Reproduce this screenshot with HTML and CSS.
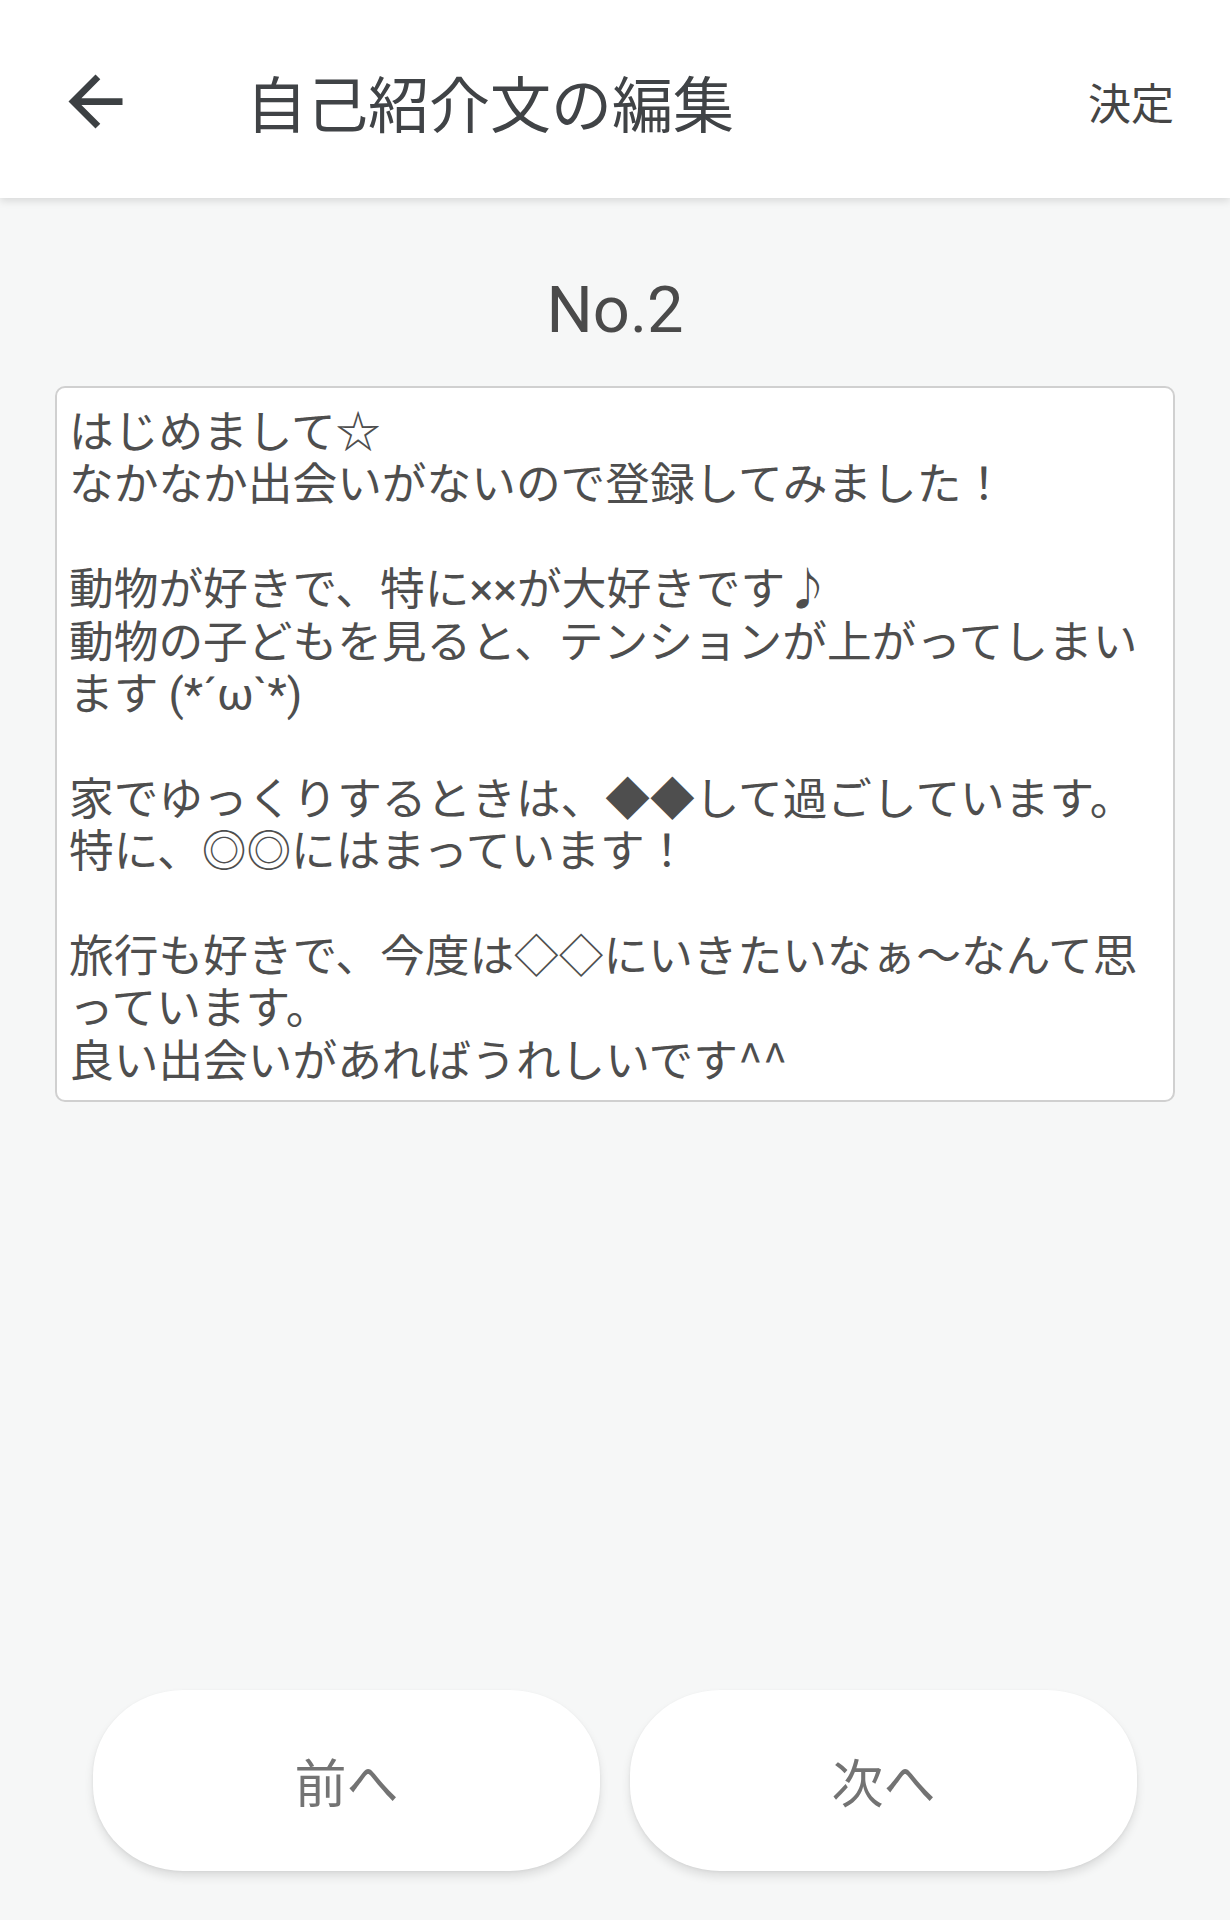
FILE: index.html
```html
<!DOCTYPE html>
<html lang="ja">
<head>
<meta charset="utf-8">
<title>自己紹介文の編集</title>
<link rel="stylesheet" href="styles.css">
</head>
<body>
<div class="screen">
  <header class="appbar">
    <svg class="back" viewBox="0 0 24 24" aria-hidden="true"><path d="M20 11H7.83l5.59-5.59L12 4l-8 8 8 8 1.41-1.41L7.83 13H20v-2z"/></svg>
    <h1 class="title">自己紹介文の編集</h1>
    <span class="done">決定</span>
  </header>
  <main class="content">
    <div class="number">No.2</div>
    <div class="textbox">はじめまして☆
なかなか出会いがないので登録してみました！

動物が好きで、特に<span class="latin">××</span>が大好きです♪
動物の子どもを見ると、テンションが上がってしまいます <span class="latin">(*´ω`*)</span>

家でゆっくりするときは、◆◆して過ごしています。
特に、◎◎にはまっています！

旅行も好きで、今度は◇◇にいきたいなぁ～なんて思っています。
良い出会いがあればうれしいです^^</div>
  </main>
  <footer class="buttons">
    <button class="btn">前へ</button>
    <button class="btn">次へ</button>
  </footer>
</div>
</body>
</html>
```
FILE: styles.css
```css
html, body {
  margin: 0;
  padding: 0;
}
body {
  background: #f6f7f7;
  font-family: "Noto Sans CJK JP", "Noto Sans", Roboto, sans-serif;
  color: #4a4a4a;
}
.screen {
  width: 1230px;
  height: 1920px;
  display: flex;
  flex-direction: column;
}
.appbar {
  height: 198px;
  background: #ffffff;
  display: flex;
  align-items: center;
  padding: 0 56px 0 55px;
  box-shadow: 0 3px 8px rgba(0, 0, 0, 0.12);
  position: relative;
  z-index: 1;
  flex-shrink: 0;
}
.back {
  width: 81px;
  height: 81px;
  fill: #3c4043;
  flex-shrink: 0;
  margin-top: 4px;
}
.title {
  margin: 0 0 0 110px;
  font-size: 61px;
  font-weight: 400;
  color: #404346;
  flex: 1;
  letter-spacing: 0;
  margin-top: 4px;
}
.done {
  font-size: 43px;
  color: #454545;
  margin-top: 4px;
}
.content {
  display: flex;
  flex-direction: column;
  align-items: center;
  padding: 0 55px;
}
.number {
  margin-top: 66px;
  font-family: Roboto, "Noto Sans", sans-serif;
  font-size: 65px;
  line-height: 92px;
  color: #4a4a4a;
}
.textbox {
  margin-top: 30px;
  align-self: stretch;
  background: #ffffff;
  border: 2px solid #d0d0d0;
  border-radius: 10px;
  padding: 15px 20px 16px 12px;
  white-space: pre-wrap;
  font-size: 44.7px;
  line-height: 52.4px;
  color: #4e4e4e;
}
.latin {
  font-family: Roboto, "Noto Sans", sans-serif;
  line-height: 0;
}
.buttons {
  margin-top: auto;
  display: grid;
  grid-template-columns: 1fr 1fr;
  gap: 30px;
  padding: 0 93px 49px;
}
.btn {
  height: 181px;
  border: none;
  background: #ffffff;
  border-radius: 90px / 85px;
  box-shadow: 0 6px 10px rgba(0, 0, 0, 0.10), 0 1px 3px rgba(0, 0, 0, 0.06);
  font-family: "Noto Sans CJK JP", sans-serif;
  font-size: 52px;
  color: #737373;
  padding: 0;
}
```
